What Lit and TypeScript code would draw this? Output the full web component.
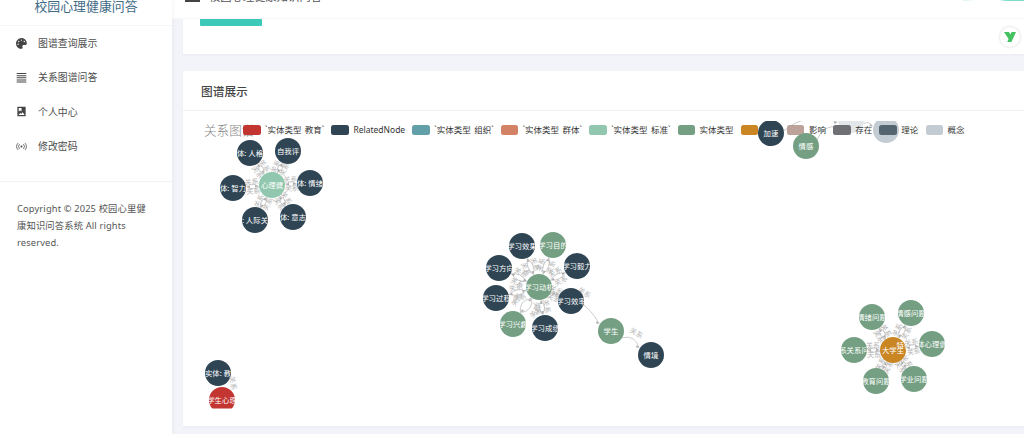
import { LitElement, html, svg, css, nothing } from "lit";
import { customElement } from "lit/decorators.js";

const DARK = "#2f4554";
const GREEN = "#749f83";
const MINT = "#91c7ae";
const ORANGE = "#ca8622";
const RED = "#c23531";
const PALE = "#c4ccd3";

type GraphNode = { x: number; y: number; label: string; color: string };
type GraphEdge = [GraphNode, GraphNode];

const legend = [
  { color: RED, label: "`实体类型 教育`" },
  { color: DARK, label: "RelatedNode" },
  { color: "#61a0a8", label: "`实体类型 组织`" },
  { color: "#d48265", label: "`实体类型 群体`" },
  { color: MINT, label: "`实体类型 标准`" },
  { color: GREEN, label: "实体类型" },
  { color: ORANGE, label: "特征" },
  { color: "#bda29a", label: "影响" },
  { color: "#6e7074", label: "存在" },
  { color: "#546570", label: "理论" },
  { color: PALE, label: "概念" },
];

// one hub with spokes around it, the way the force layout left them
const clusters: { hub: GraphNode; spokes: GraphNode[] }[] = [
  {
    hub: { x: 272, y: 185, label: "心理健", color: MINT },
    spokes: [
      { x: 250, y: 153, label: "体: 人格", color: DARK },
      { x: 288, y: 151, label: "自我评", color: DARK },
      { x: 310, y: 183, label: "体: 情绪", color: DARK },
      { x: 293, y: 217, label: "体: 意志", color: DARK },
      { x: 255, y: 220, label: ": 人际关", color: DARK },
      { x: 233, y: 188, label: "体: 智力", color: DARK },
    ],
  },
  {
    hub: { x: 539, y: 287, label: "学习动机", color: GREEN },
    spokes: [
      { x: 522, y: 246, label: "学习效果", color: DARK },
      { x: 553, y: 245, label: "学习目的", color: GREEN },
      { x: 577, y: 266, label: "学习毅力", color: DARK },
      { x: 571, y: 301, label: "学习效率", color: DARK },
      { x: 545, y: 328, label: "学习成绩", color: DARK },
      { x: 513, y: 324, label: "学习兴趣", color: GREEN },
      { x: 496, y: 298, label: "学习过程", color: DARK },
      { x: 499, y: 268, label: "学习方向", color: DARK },
    ],
  },
  {
    hub: { x: 893, y: 350, label: "大学生", color: ORANGE },
    spokes: [
      { x: 872, y: 317, label: "情绪问题", color: GREEN },
      { x: 911, y: 313, label: "情感问题", color: GREEN },
      { x: 932, y: 344, label: "体心理健", color: GREEN },
      { x: 914, y: 379, label: "学业问题", color: GREEN },
      { x: 876, y: 381, label: "教育问题", color: GREEN },
      { x: 854, y: 350, label: "系关系问", color: GREEN },
    ],
  },
];

const student: GraphNode = { x: 611, y: 331, label: "学生", color: GREEN };
const situation: GraphNode = { x: 651, y: 355, label: "情境", color: DARK };
const speedUp: GraphNode = { x: 771, y: 133, label: "加速", color: DARK };
const emotion: GraphNode = { x: 806, y: 146, label: "情感", color: GREEN };
const paleA: GraphNode = { x: 851, y: 120, label: "", color: "#e3e7ea" };
const paleB: GraphNode = { x: 886, y: 130, label: "", color: PALE };
const eduEntity: GraphNode = { x: 218, y: 373, label: "实体: 教", color: DARK };
const eduStudent: GraphNode = { x: 222, y: 400, label: "学生心理", color: RED };

// the nodes behind the legend swatches
const backNodes: GraphNode[] = [paleA, paleB];
const backEdges: GraphEdge[] = [
  [speedUp, paleA],
  [emotion, paleA],
  [paleA, paleB],
];

const frontNodes: GraphNode[] = [
  ...clusters.flatMap((c) => [...c.spokes, c.hub]),
  student,
  situation,
  speedUp,
  emotion,
  eduEntity,
  eduStudent,
];

const frontEdges: GraphEdge[] = [
  // every spoke is linked both ways, so two labels pile up on it
  ...clusters.flatMap((c) =>
    c.spokes.flatMap((s) => [[c.hub, s] as GraphEdge, [s, c.hub] as GraphEdge])
  ),
  [clusters[1].hub, student],
  [student, situation],
];

function edgeParts(a: GraphNode, b: GraphNode) {
  const dx = b.x - a.x;
  const dy = b.y - a.y;
  const len = Math.hypot(dx, dy);
  const ux = dx / len;
  const uy = dy / len;
  const long = len > 45;
  const bend = len * (long ? 0.2 : 0.12);
  const sx = a.x + ux * 13;
  const sy = a.y + uy * 13;
  const ex = b.x - ux * 14;
  const ey = b.y - uy * 14;
  const cx = (sx + ex) / 2 + uy * bend;
  const cy = (sy + ey) / 2 - ux * bend;
  const lift = long ? 2 : 0;
  const lx = cx + uy * lift;
  const ly = cy - ux * lift;
  let angle = (Math.atan2(dy, dx) * 180) / Math.PI;
  if (angle > 90) angle -= 180;
  if (angle < -90) angle += 180;
  return { sx, sy, ex, ey, cx, cy, lx, ly, angle, ux, uy };
}

@customElement("app-root")
export class AppRoot extends LitElement {
  static styles = css`
    :host {
      display: block;
      width: 1024px;
      height: 434px;
      overflow: hidden;
      background: #f3f4f9;
      color: #444;
      font-family: "Noto Sans", "Noto Sans CJK SC", sans-serif;
    }
    * {
      box-sizing: border-box;
    }
    .page {
      display: grid;
      grid-template-columns: 172px 1fr;
      height: 434px;
    }
    .sidebar {
      background: #fff;
      box-shadow: 1px 0 4px rgba(60, 70, 110, 0.06);
      z-index: 1;
    }
    .brand {
      height: 26px;
      border-bottom: 1px solid #f5f5f7;
      text-align: center;
      font-size: 12.9px;
      line-height: 12px;
      color: #3f6b86;
    }
    .nav {
      margin-bottom: 18px;
    }
    .nav-item {
      display: flex;
      align-items: center;
      gap: 11px;
      height: 34.3px;
      padding-left: 16px;
      font-size: 9.9px;
      color: #4d4d4d;
    }
    .nav-item svg {
      width: 11px;
      height: 11px;
      fill: #444;
      flex: none;
    }
    .copyright {
      border-top: 1px solid #f2f2f4;
      padding: 18px 17px 0;
      font-size: 9.3px;
      line-height: 17px;
      color: #555;
      letter-spacing: 0.15px;
    }
    .main {
      display: flex;
      flex-direction: column;
      min-width: 0;
    }
    .topbar {
      height: 19px;
      flex: none;
      background: #fff;
      overflow: hidden;
      display: flex;
      gap: 9px;
      padding-left: 13px;
      border-bottom: 1px solid #f8f8fa;
    }
    .burger {
      width: 15px;
      height: 2px;
      background: #444;
      flex: none;
    }
    .crumb {
      margin-top: -9px;
      font-size: 11.3px;
      line-height: 12px;
      color: #555;
      white-space: nowrap;
    }
    .top-tail {
      margin-left: auto;
      width: 61px;
      height: 1px;
      background: linear-gradient(90deg, #d9f5f0, #fff 20%, #fff 60%, #7fdccd 70%, #7fdccd);
    }
    .content {
      display: flex;
      flex-direction: column;
      gap: 17px;
      padding-left: 11px;
    }
    .card {
      background: #fff;
      box-shadow: 0 1px 2px rgba(60, 70, 110, 0.05);
    }
    .search {
      position: relative;
      height: 35px;
      padding-left: 17px;
    }
    .teal {
      width: 62px;
      height: 7px;
      background: #3cc9b7;
      border-radius: 0 0 1px 1px;
    }
    .badge {
      position: absolute;
      right: 4px;
      top: 8px;
      width: 20px;
      height: 20px;
      border-radius: 50%;
      background: #fff;
      box-shadow: 0 0 3px rgba(0, 0, 0, 0.18);
      display: flex;
      align-items: center;
      justify-content: center;
    }
    .graph-card {
      height: 355px;
    }
    .graph-head {
      height: 40px;
      padding-left: 18px;
      border-bottom: 1px solid #f2f2f4;
      display: flex;
      align-items: center;
      font-size: 11.7px;
      font-weight: 500;
      color: #444;
    }
    .canvas {
      position: relative;
      height: 315px;
    }
    .chart-title {
      position: absolute;
      left: 21px;
      top: 12px;
      font-size: 12.6px;
      line-height: 16px;
      color: #888;
      font-weight: 300;
    }
    .legend {
      position: absolute;
      left: 60px;
      top: 14px;
      display: flex;
      gap: 7.2px;
      white-space: nowrap;
      font-size: 8.5px;
      line-height: 10px;
      word-spacing: 1.2px;
      color: #333;
    }
    .legend-item {
      display: flex;
      align-items: center;
      gap: 4.5px;
    }
    .swatch {
      width: 17.5px;
      height: 10px;
      border-radius: 2.5px;
    }
    .graph {
      position: absolute;
      inset: 0;
      width: 841px;
      height: 315px;
    }
    .node-label {
      font-size: 7.4px;
      fill: #fff;
      text-anchor: middle;
      dominant-baseline: central;
    }
    .edge {
      fill: none;
      stroke: #aaa;
      stroke-width: 0.6;
    }
    .edge-label {
      font-size: 7px;
      fill: #b4b4b4;
      text-anchor: middle;
      dominant-baseline: central;
    }
  `;

  renderEdge([a, b]: GraphEdge) {
    const p = edgeParts(a, b);
    const ax = p.ex - p.ux * 3;
    const ay = p.ey - p.uy * 3;
    return svg`
      <path class="edge" d="M${p.sx} ${p.sy}Q${p.cx} ${p.cy} ${p.ex} ${p.ey}" />
      <path fill="#aaa" d="M${p.ex} ${p.ey}L${ax + p.uy * 1.3} ${ay - p.ux * 1.3}L${ax - p.uy * 1.3} ${ay + p.ux * 1.3}Z" />
      ${p.ly > 125
        ? svg`<text class="edge-label" transform="translate(${p.lx} ${p.ly}) rotate(${p.angle})">关系</text>`
        : nothing}
    `;
  }

  renderNode(n: GraphNode, id: string) {
    return svg`
      <clipPath id=${id}><circle cx=${n.x} cy=${n.y} r="13" /></clipPath>
      <circle cx=${n.x} cy=${n.y} r="13" fill=${n.color} />
      <text class="node-label" x=${n.x} y=${n.y} clip-path="url(#${id})">${n.label}</text>
    `;
  }

  render() {
    const hubId = `f${frontNodes.indexOf(clusters[2].hub)}`;
    return html`
      <div class="page">
        <aside class="sidebar">
          <div class="brand">校园心理健康问答</div>
          <nav class="nav">
            <div class="nav-item">
              <svg viewBox="0 0 512 512"><path d="M204 6C105 25 25 104 6 203c-36 187 129 322 254 303 40-6 60-53 42-89-22-44 10-96 60-96h78c35 0 64-29 64-65C503 100 364-25 204 6zM96 320a32 32 0 1 1 0-64 32 32 0 0 1 0 64zm32-128a32 32 0 1 1 0-64 32 32 0 0 1 0 64zm128-64a32 32 0 1 1 0-64 32 32 0 0 1 0 64zm128 64a32 32 0 1 1 0-64 32 32 0 0 1 0 64z" /></svg>
              图谱查询展示
            </div>
            <div class="nav-item">
              <svg viewBox="0 0 16 16"><path d="M1 1.5h14v1.4H1zM1 4.6h14V6H1zM1 7.7h14v1.4H1zM1 10.8h14v1.4H1zM1 13.9h14v1.4H1z" /></svg>
              关系图谱问答
            </div>
            <div class="nav-item">
              <svg viewBox="0 0 16 16"><path d="M2 1h12v14H2zM3.5 13h9L9.7 9 7.8 11.4 6.4 10zM8 3H4v5l2-1.3L8 8z" fill-rule="evenodd" /></svg>
              个人中心
            </div>
            <div class="nav-item">
              <svg viewBox="0 0 16 16">
                <circle cx="8" cy="8" r="1.4" />
                <path d="M5.2 4.6a5 5 0 0 0 0 6.8M10.8 4.6a5 5 0 0 1 0 6.8M3 3a7.6 7.6 0 0 0 0 10M13 3a7.6 7.6 0 0 1 0 10" fill="none" stroke="#444" stroke-width="1.1" />
              </svg>
              修改密码
            </div>
          </nav>
          <div class="copyright">Copyright © 2025 校园心里健康知识问答系统 All rights reserved.</div>
        </aside>
        <main class="main">
          <div class="topbar">
            <div class="burger"></div>
            <div class="crumb">校园心理健康知识问答</div>
            <div class="top-tail"></div>
          </div>
          <div class="content">
            <section class="card search">
              <div class="teal"></div>
              <div class="badge">
                <svg width="12" height="10" viewBox="0 0 12 10"><path d="M0 0h5l1.4 2.6L7.6 0H12L7.4 10H3.2l1.4-3z" fill="#42c261" /></svg>
              </div>
            </section>
            <section class="card graph-card">
              <div class="graph-head">图谱展示</div>
              <div class="canvas">
                <div class="chart-title">关系图谱</div>
                <svg class="graph" viewBox="183 111 841 315">
                  <defs>
                    <clipPath id="back-view"><rect x="183" y="121" width="841" height="287.5" /></clipPath>
                  </defs>
                  <g clip-path="url(#back-view)">
                    ${backEdges.map((e) => this.renderEdge(e))}
                    ${backNodes.map((n, i) => this.renderNode(n, `b${i}`))}
                  </g>
                </svg>
                <div class="legend">
                  ${legend.map(
                    (item) => html`
                      <div class="legend-item">
                        <div class="swatch" style="background:${item.color}"></div>
                        ${item.label}
                      </div>
                    `
                  )}
                </div>
                <svg class="graph" viewBox="183 111 841 315">
                  <defs>
                    <clipPath id="view"><rect x="183" y="121" width="841" height="287.5" /></clipPath>
                  </defs>
                  <g clip-path="url(#view)">
                    ${frontEdges.map((e) => this.renderEdge(e))}
                    ${frontNodes.map((n, i) => this.renderNode(n, `f${i}`))}
                    <text class="node-label" x="904" y="345" clip-path="url(#${hubId})">特征</text>
                    <text class="edge-label" transform="translate(233 383) rotate(80)">关系</text>
                  </g>
                </svg>
              </div>
            </section>
          </div>
        </main>
      </div>
    `;
  }
}

declare global {
  interface HTMLElementTagNameMap {
    "app-root": AppRoot;
  }
}
